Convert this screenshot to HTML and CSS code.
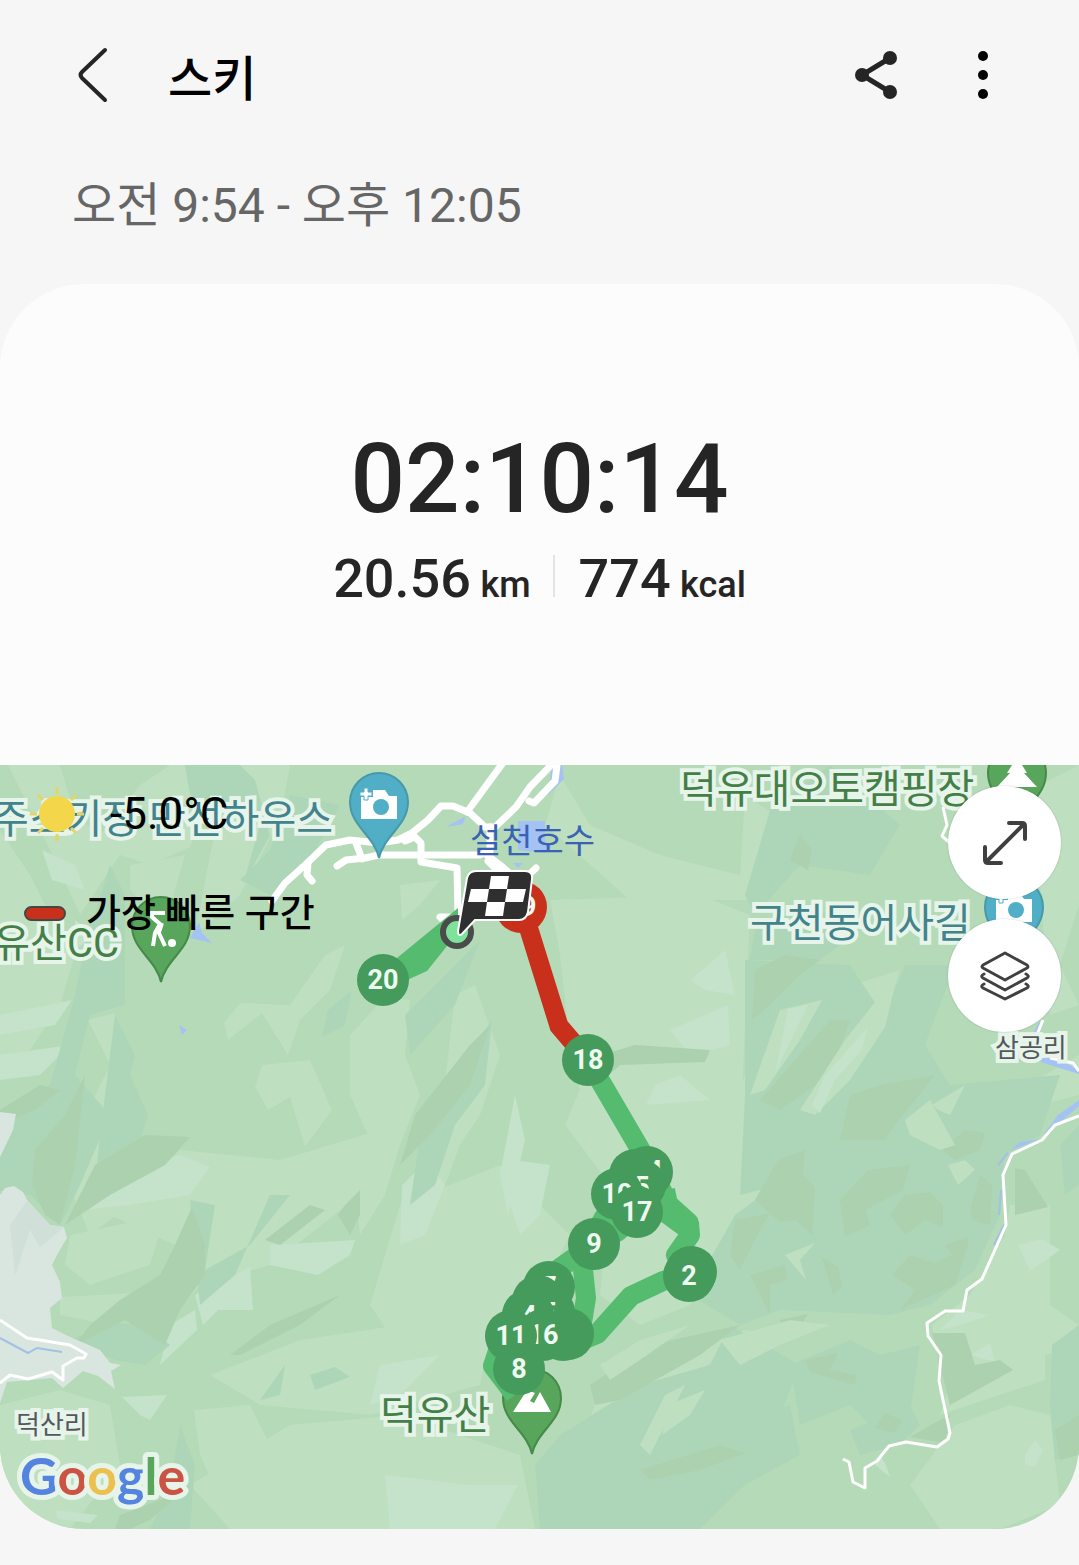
FILE: index.html
```html
<!DOCTYPE html>
<html lang="ko">

<head>
    <meta charset="UTF-8">
    <meta name="viewport" content="width=device-width, initial-scale=1.0">
    <title>스키</title>
    <link rel="stylesheet" href="styles.css">
</head>

<body>
    <header class="topbar">
        <button class="icon-btn back" aria-label="뒤로">
            <svg width="32" height="58" viewBox="0 0 32 58"><path d="M29 4 L6 26 Q3 29 6 32 L29 54" /></svg>
        </button>
        <h1>스키</h1>
        <button class="icon-btn share" aria-label="공유">
            <svg width="46" height="50" viewBox="0 0 46 50">
                <path d="M37 8 L9 25 L37 42" />
                <circle cx="37" cy="8" r="7" />
                <circle cx="9" cy="25" r="7" />
                <circle cx="37" cy="42" r="7" />
            </svg>
        </button>
        <button class="icon-btn more" aria-label="더보기">
            <svg width="12" height="50" viewBox="0 0 12 50">
                <circle cx="6" cy="6" r="5" />
                <circle cx="6" cy="25" r="5" />
                <circle cx="6" cy="44" r="5" />
            </svg>
        </button>
    </header>

    <p class="period">오전 9:54 - 오후 12:05</p>

    <main class="card">
        <section class="summary">
            <div class="duration">02:10:14</div>
            <div class="stats">
                <div class="stat">20.56 <span>km</span></div>
                <div class="stat">774 <span>kcal</span></div>
            </div>
        </section>

        <section class="map">
            <svg class="map-canvas" viewBox="0 0 1079 764">
                <defs>
                    <path id="pin" d="M0 56 C-5 33 -29 24 -29 0 A29 29 0 0 1 29 0 C29 24 5 33 0 56 Z" />
                    <g id="camera">
                        <path d="M-18 15 V-7 H-6 V-14 H6 L10 -8 H18 V15 Z" />
                        <path d="M-19 -8 V-12 H-15 V-16 H-11 V-12 H-7 V-8 H-11 V-4 H-15 V-8 Z" stroke="#51aec7" stroke-width="1" />
                        <circle cx="2" cy="3" r="8" fill="#51aec7" />
                    </g>
                </defs>

                <!-- terrain -->
                <rect width="1079" height="764" fill="#b5dab8" />
                <g class="light">
                    <path d="M8 0 L38 60 L55 95 L80 150 L120 90 L150 100 L190 82 L225 0 H170 L140 20 L100 70 L75 50 L60 0 Z" />
                    <path d="M0 65 L30 110 L50 150 L75 190 L60 240 L20 300 L0 310 Z" />
                    <path d="M130 100 L185 90 L165 160 L130 125 Z" />
                    <path d="M230 0 H290 L280 55 L240 130 L195 170 L210 90 Z" />
                    <path d="M88 255 L115 248 L125 320 L100 380 L130 440 L90 470 L60 400 L110 300 Z" />
                    <path d="M224 258 L240 238 L290 240 L325 190 L345 180 L330 225 L300 255 L288 290 L262 248 L228 275 Z" />
                    <path d="M262 300 L310 295 L332 345 L305 382 L290 332 L268 345 L255 322 Z" />
                    <path d="M350 270 L385 232 L410 235 L405 290 L420 330 L400 380 L385 430 L360 470 L355 420 L368 370 L350 330 Z" />
                    <path d="M400 120 L440 115 L420 140 L402 155 Z" />
                    <path d="M455 230 L475 220 L500 290 L480 350 L460 380 L430 460 L400 500 L415 430 L440 360 Z" />
                    <path d="M560 10 L590 60 L660 90 L740 110 L745 30 L790 60 L750 135 L630 135 L545 60 Z" />
                    <path d="M550 135 L700 130 L750 150 L742 330 L700 320 L590 370 L570 280 L560 190 Z" />
                    <path d="M590 300 L740 290 L745 400 L660 430 L610 420 L565 360 Z" />
                    <path d="M820 230 L900 205 L870 300 L820 360 L770 385 L790 320 Z" />
                    <path d="M110 450 L180 385 L280 395 L380 365 L360 430 L270 500 L200 520 L150 580 L175 480 Z" />
                    <path d="M70 470 L165 450 L150 500 L90 520 L65 500 Z" />
                    <path d="M60 532 L135 528 L110 560 L60 550 Z" />
                    <path d="M210 610 L300 575 L400 560 L490 570 L480 620 L370 650 L260 640 Z" />
                    <path d="M290 660 L400 650 L520 690 L535 764 H230 L190 720 Z" />
                    <path d="M194 645 L250 640 L280 700 L300 764 H235 L200 690 Z" />
                    <path d="M400 440 L500 400 L570 470 L540 530 L480 580 L410 600 L370 540 Z" />
                    <path d="M610 430 L760 390 L745 430 L790 400 L720 480 L690 540 L640 560 L600 530 Z" />
                    <path d="M745 310 L800 300 L760 400 L720 470 L720 370 Z" />
                    <path d="M600 620 L700 570 L750 565 L660 640 L580 690 Z" />
                    <path d="M1010 440 L1050 440 L1050 540 L1079 560 V580 L1045 590 V615 L940 650 L950 620 L935 585 L932 560 L970 530 L1005 470 Z" />
                    <path d="M955 660 L1010 640 L1050 650 L1060 740 L1000 764 H940 L910 720 Z" />
                    <path d="M720 340 L780 370 L740 420 L720 430 Z" />
                    <path d="M1010 330 L1079 290 V330 L1040 340 Z" />
                    <path d="M1020 30 L1079 0 V140 L1060 200 L1079 240 L1050 250 L1040 120 Z" />
                    <path d="M0 640 L60 625 L110 640 L120 700 L70 764 H30 L0 700 Z" />
                </g>
                <g class="bright">
                    <path d="M42 85 L75 100 L85 125 L52 115 Z" />
                    <path d="M0 250 L72 235 L55 260 L0 270 Z" />
                    <path d="M0 290 L70 280 L40 310 L0 315 Z" />
                    <path d="M83 445 L120 410 L180 390 L210 402 L190 430 L130 440 Z" />
                    <path d="M195 530 L250 502 L253 545 L218 545 L203 560 Z" />
                    <path d="M170 560 L195 545 L197 565 L160 600 Z" />
                    <path d="M270 480 L355 475 L350 490 L318 510 L270 500 Z" />
                    <path d="M402 420 L428 395 L445 420 L425 470 L400 480 Z" />
                    <path d="M515 330 L525 375 L508 450 L500 410 Z" />
                    <path d="M512 395 L550 400 L540 450 L520 470 L510 440 Z" />
                    <path d="M655 320 L680 310 L710 335 L646 340 Z" />
                    <path d="M690 215 L725 185 L735 230 L705 225 Z" />
                    <path d="M670 265 L728 240 L730 280 L690 290 Z" />
                    <path d="M385 710 L470 720 L518 720 L495 764 H390 Z" />
                    <path d="M380 600 L440 590 L400 630 L370 640 Z" />
                    <path d="M1018 480 L1042 474 L1060 485 L1030 506 Z" />
                    <path d="M940 565 L960 545 L990 550 L960 560 Z" />
                    <path d="M970 590 L990 578 L995 597 Z" />
                    <path d="M1025 690 L1035 675 L1043 685 L1035 702 L1025 700 Z" />
                    <path d="M880 690 L886 700 L890 712 L875 700 Z" />
                    <path d="M122 632 L167 630 L150 655 L140 650 Z" />
                    <path d="M55 745 L98 750 L90 758 L58 754 Z" />
                    <path d="M75 155 L95 170 L75 185 Z" />
                </g>
                <g class="teal">
                    <path d="M185 0 H240 L255 15 L270 70 L243 120 L260 60 L225 50 L190 30 Z" />
                    <path d="M290 30 L340 40 L310 95 L270 130 L240 115 L270 85 Z" />
                    <path d="M110 100 L125 130 L125 240 L90 250 L75 310 L110 350 L80 420 L60 460 L30 430 L0 425 V360 L50 320 L75 230 L85 180 Z" />
                    <path d="M115 250 L135 290 L130 310 L148 350 L130 410 L95 420 L100 370 Z" />
                    <path d="M328 245 L352 225 L345 260 L322 272 Z" />
                    <path d="M405 250 L480 175 L455 240 L410 290 Z" />
                    <path d="M445 345 L460 300 L492 255 L485 320 L455 360 L435 420 L410 440 L420 370 Z" />
                    <path d="M190 435 L215 440 L205 505 L250 480 L290 430 L270 430 L235 510 L200 540 Z" />
                    <path d="M70 575 L110 558 L145 560 L170 580 L145 600 L115 595 Z" />
                    <path d="M770 45 L830 0 L900 60 L870 110 L800 100 L755 150 L745 130 Z" />
                    <path d="M755 165 L800 135 L860 165 L820 195 L750 195 Z" />
                    <path d="M745 195 L850 200 L890 260 L860 360 L780 420 L740 430 L745 330 Z" />
                    <path d="M905 200 L955 200 L925 280 L950 320 L1060 310 L1040 370 L1005 390 L1000 450 L975 505 L930 540 L890 550 L780 545 L740 560 L690 530 L735 450 L830 380 Z" />
                    <path d="M560 670 L640 620 L710 600 L730 560 L800 600 L780 650 L740 680 L700 764 H540 L535 700 Z" />
                    <path d="M790 600 L850 575 L880 590 L920 580 L910 650 L880 670 L850 640 L800 660 Z" />
                    <path d="M700 670 L790 640 L800 690 L745 720 L700 764 H640 Z" />
                    <path d="M1052 580 L1079 560 V690 L1055 695 L1050 640 Z" />
                    <path d="M1060 380 L1079 360 V420 L1065 430 Z" />
                    <path d="M310 610 L335 602 L350 612 L315 625 Z" />
                    <path d="M260 635 L285 600 L280 630 Z" />
                    <path d="M180 660 L195 700 L190 764 H150 L170 720 Z" />
                    <path d="M850 665 L910 640 L920 660 L900 680 L860 690 Z" />
                </g>
                <g class="dark">
                    <path d="M35 385 L65 350 L85 310 L75 400 L60 460 L45 450 L32 420 Z" />
                    <path d="M95 400 L145 370 L190 372 L165 400 L110 430 L65 460 L85 420 Z" />
                    <path d="M192 442 L205 480 V510 L180 545 L165 580 L125 555 L75 580 L90 560 L120 535 L160 510 L175 480 Z" />
                    <path d="M415 350 L470 280 L490 260 L470 320 L430 370 L400 400 Z" />
                    <path d="M585 295 L635 280 L710 285 L705 297 L620 300 L600 318 Z" />
                    <path d="M755 205 L785 190 L820 195 L800 210 L770 240 L752 255 Z" />
                    <path d="M760 335 L830 255 L850 255 L830 310 L780 345 Z" />
                    <path d="M850 330 L880 320 L935 310 L895 360 L885 375 L840 375 Z" />
                    <path d="M800 70 L812 85 L808 105 L790 95 Z" />
                    <path d="M778 395 L805 385 L803 410 L815 422 L812 470 L795 455 L780 457 L755 435 Z" />
                    <path d="M735 455 L770 448 L760 465 L740 505 L730 490 Z" />
                    <path d="M840 435 L868 405 L910 400 L903 425 L865 445 L870 460 L845 472 Z" />
                    <path d="M890 450 L905 430 L930 427 L943 440 V462 L925 455 L905 470 Z" />
                    <path d="M942 385 L965 365 L985 368 L980 385 L955 395 Z" />
                    <path d="M970 445 L980 410 L992 420 L990 460 L972 455 Z" />
                    <path d="M892 510 L910 490 L935 498 L952 490 L945 480 L968 472 V480 L955 520 L900 545 L915 525 Z" />
                    <path d="M750 510 L785 500 L787 515 L770 520 V550 Z" />
                    <path d="M822 492 L838 502 L842 522 L833 530 Z" />
                    <path d="M780 555 L808 549 L800 562 L785 565 Z" />
                    <path d="M805 595 L838 588 L830 605 L857 610 L855 620 L810 607 Z" />
                    <path d="M590 620 L650 580 L740 560 L700 590 L620 635 L595 640 Z" />
                    <path d="M640 705 L720 680 L745 688 L700 705 L650 715 Z" />
                    <path d="M875 663 L885 648 L902 655 L895 668 Z" />
                    <path d="M910 672 L940 655 L950 650 L945 678 Z" />
                    <path d="M1015 403 L1025 405 L1048 442 L1015 450 Z" />
                    <path d="M932 568 L965 568 L975 600 L1000 595 L1013 605 L950 640 Z" />
                    <path d="M1055 665 L1079 650 V690 L1060 695 Z" />
                    <path d="M120 750 L160 735 L190 720 L150 755 L130 764 H115 Z" />
                    <path d="M230 590 L270 560 L340 530 L300 560 L240 590 Z" />
                    <path d="M265 475 L310 440 L325 445 L280 480 Z" />
                    <path d="M345 440 L360 425 V450 L350 470 L338 450 Z" />
                    <path d="M0 345 L40 320 L60 325 L35 345 L0 360 Z" />
                </g>
                <!-- ridges catching the light -->
                <g class="light">
                    <path d="M780 245 L822 235 L800 275 L765 325 L750 330 Z" />
                    <path d="M898 208 L885 262 L850 315 L815 350 L800 345 L845 275 Z" />
                    <path d="M932 340 L965 320 L950 350 L938 345 Z" />
                    <path d="M905 355 L930 335 L955 380 L940 385 L910 370 Z" />
                    <path d="M785 490 L815 478 L800 495 L806 515 Z" />
                    <path d="M948 400 L965 395 L975 405 L958 420 Z" />
                    <path d="M600 600 L640 575 L690 560 L640 595 L610 615 Z" />
                    <path d="M640 680 L665 630 L685 620 L650 690 Z" />
                    <path d="M668 640 L705 625 L690 650 L662 670 Z" />
                    <path d="M720 575 L790 555 L830 560 L780 580 L740 600 Z" />
                </g>
                <g class="bright">
                    <path d="M788 244 L808 240 L775 308 Z" />
                    <path d="M868 262 L862 285 L835 315 L820 348 L812 340 L825 310 Z" />
                </g>
                <g class="bare">
                    <path d="M0 347 L16 349 L13 365 L0 392 Z" />
                    <path d="M0 430 L5 423 L14 421 L23 427 L27 435 L50 460 L64 462 L67 473 L58 488 L52 500 L60 517 L62 533 L50 543 L52 563 L68 571 L100 585 L110 598 L121 600 L111 606 L115 624 L98 611 L83 606 L63 623 L52 613 L7 617 L0 638 Z" />
                </g>
                <path d="M27 436 L50 460 L64 462 L40 482 L30 465 L15 511 L10 460 Z" fill="#d0e0d8" />

                <!-- water -->
                <g class="water">
                    <path d="M446 62 L466 51 L463 59 Z" />
                    <path d="M518 56 H545 V76 L552 82 L545 88 L518 85 Z" />
                    <path d="M513 98 L523 98 L518 103 Z" />
                    <path d="M552 0 H562 L564 14 L548 30 Z" />
                    <path d="M190 173 L199 157 L202 168 L212 178 Z" />
                    <path d="M179 260 L187 265 L182 270 Z" />
                    <path d="M1079 335 L1058 350 L1044 369 L1048 368 L1079 341 Z" />
                    <path d="M1040 374 L1020 377 L1010 386 Z" />
                    <path d="M1030 275 L1040 255 V270 L1034 285 L1060 295 L1079 305 V309 L1050 300 L1028 292 Z" />
                </g>
                <path d="M0 573 L28 588 L37 583 L62 587 M1001 425 L999 450 M1004 460 L994 480 M1008 388 L998 400" fill="none" stroke="#a3c0e6" stroke-width="2" />

                <!-- roads -->
                <g class="roads">
                    <path d="M272 136 L285 118 L305 100 L326 80 L350 75 L379 78 L398 75 L412 68 L428 55 L441 41 L453 41 L470 48 L485 62 L495 62 L516 42 L530 22 L557 -6" />
                    <path d="M467 47 L505 -5" />
                    <path d="M529 36 L534 38 L555 16 L557 0" />
                    <path d="M337 101 L346 95 L365 93 L379 90 H480" />
                    <path d="M356 78 L362 94 M308 98 L307 110 L312 116 M405 76 L415 72 L421 78 V97 L457 103 L458 150" />
                    <path d="M484 88 L500 100 L540 135 M490 62 V95 M492 95 L520 118 L536 103 M488 96 L512 120" />
                    <path d="M440 152 H458 L450 162 Z" />
                </g>
                <g class="trails">
                    <path d="M1079 351 L1055 360 L1042 375 L1012 389 L1003 410 L1006 460 L982 514 L967 525 L963 546 H945 L927 558 L928 571 L941 590 L939 616 L950 668 L948 674 L937 682 L906 677 L889 681 L877 696 L865 703 V723 L853 717 L849 697 L843 694" />
                    <path d="M0 555 L27 573 L70 580 L86 589 L84 593 L77 593 L63 601 V615 L52 607 L28 614 L10 610 L0 618" />
                    <path d="M943 42 L947 60 L942 71 L950 78 M1043 255 L1036 272 M1050 293 L1073 298 L1079 306" />
                </g>

                <!-- places -->
                <g class="pin green">
                    <use href="#pin" x="161" y="161" />
                    <use href="#pin" x="1017" y="8" />
                    <use href="#pin" x="532" y="633" />
                </g>
                <g class="pin blue">
                    <use href="#pin" x="379" y="37" />
                    <use href="#pin" x="1014" y="142" />
                </g>
                <g fill="#fff">
                    <use href="#camera" x="379" y="39" />
                    <use href="#camera" x="1014" y="142" />
                    <circle cx="172" cy="178" r="4" />
                    <path d="M1017 -8 L1027 8 H1024 L1037 22 H997 L1010 8 H1007 Z" />
                    <path d="M513 647 L527 625 L535 628 L530 636 L534 638 L540 627 L551 647 Z" />
                </g>
                <path d="M165 148 H152 V152 L160 159 L155 168 L153 181 M158 166 L165 181 M162 158 L159 167" fill="none" stroke="#fff" stroke-width="4" />
                <g class="places">
                    <text class="teal-label" x="333" y="68" text-anchor="end">무주스키장 만선하우스</text>
                    <text class="green-label" x="119" y="192" text-anchor="end">덕유산CC</text>
                    <text class="green-label" x="680" y="38">덕유대오토캠핑장</text>
                    <text class="teal-label" x="750" y="172">구천동어사길</text>
                    <text class="green-label" x="380" y="664">덕유산</text>
                    <text class="town" x="995" y="292">삼공리</text>
                    <text class="town" x="16" y="669">덕산리</text>
                </g>
                <text class="lake" x="470" y="88">설천호수</text>
                <text class="google" x="20" y="730"><tspan class="g-blue">G</tspan><tspan class="g-red">o</tspan><tspan class="g-yellow">o</tspan><tspan class="g-blue">g</tspan><tspan class="g-green">l</tspan><tspan class="g-red">e</tspan></text>

                <!-- route -->
                <path d="M397 193 L458 143 V167 L447 181 L427 206 L405 216 L385 214 Z" fill="#55bb6f" />
                <g class="route">
                    <path d="M588 295 L647 396 L669 440 L689 458 L690 470 L676 490 L690 508 L663 516 L631 531 L597 569 L570 580" />
                    <path d="M665 425 L668 440 M655 440 L685 462 M640 447 L617 467 L594 479 L560 503 L540 530 L500 580 L493 601 L515 630" />
                    <path d="M617 430 L594 470 L582 495 L586 533 L580 570" />
                </g>
                <path d="M522 142 L559 261 L588 295" fill="none" stroke="#c9301c" stroke-width="19" />
                <g class="marker">
                    <circle cx="383" cy="215" r="26" /><text x="383" y="224">20</text>
                    <circle cx="588" cy="295" r="26" /><text x="588" y="304">18</text>
                    <circle cx="635" cy="410" r="26" />
                    <circle cx="647" cy="407" r="26" /><text x="647" y="415">14</text>
                    <circle cx="640" cy="420" r="26" /><text x="642" y="431">5</text>
                    <circle cx="617" cy="429" r="26" /><text x="617" y="438">10</text>
                    <circle cx="637" cy="447" r="26" /><text x="637" y="456">17</text>
                    <circle cx="594" cy="479" r="26" /><text x="594" y="488">9</text>
                    <circle cx="691" cy="507" r="26" />
                    <circle cx="689" cy="511" r="26" /><text x="689" y="520">2</text>
                    <circle cx="549" cy="522" r="26" /><text x="549" y="531">7</text>
                    <circle cx="538" cy="536" r="26" /><text x="538" y="545">12</text>
                    <circle cx="549" cy="547" r="26" /><text x="549" y="557">5</text>
                    <circle cx="528" cy="550" r="26" /><text x="529" y="560">4</text>
                    <circle cx="568" cy="569" r="26" /><text x="568" y="578">13</text>
                    <circle cx="563" cy="570" r="26" />
                    <circle cx="543" cy="570" r="26" /><text x="543" y="579">16</text>
                    <circle cx="511" cy="571" r="26" /><text x="511" y="580">11</text>
                    <circle cx="519" cy="604" r="26" /><text x="519" y="613">8</text>
                    <circle cx="521" cy="142" r="26" fill="#c9301c" /><text x="521" y="151">19</text>
                </g>

                <!-- finish -->
                <circle cx="457" cy="167" r="14" fill="#7ee29a" stroke="#4b4b4b" stroke-width="6" />
                <path d="M476 106 H525 Q533 106 532 114 L528 147 Q526 155 519 155 H475 L462 169 Q458 172 458 166 L467 113 Q469 106 476 106 Z" fill="#2f2f2f" stroke="#fff" stroke-width="2" />
                <path d="M491 111 H509 L507 124 H526 L523 137 H505 L503 151 H485 L487 137 H468 L471 124 H489 Z M489 124 L487 137 H505 L507 124 Z" fill="#fff" fill-rule="evenodd" />
            </svg>

            <div class="legend">
                <div class="legend-row weather">
                    <svg width="58" height="58" viewBox="0 0 58 58">
                        <path d="M29 2 V9 M29 49 V56 M2 29 H9 M49 29 H56 M10 10 L15 15 M43 43 L48 48 M48 10 L43 15 M15 43 L10 48" stroke="#e3d567" stroke-width="3" />
                        <circle cx="29" cy="29" r="18" fill="#f4d64a" />
                    </svg>
                    <span>-5.0°C</span>
                </div>
                <div class="legend-row fastest">
                    <i class="swatch"></i>
                    <span>가장 빠른 구간</span>
                </div>
            </div>

            <div class="map-buttons">
                <button class="round-btn" aria-label="지도 확대">
                    <svg width="46" height="46" viewBox="0 0 46 46"><path d="M5 41 L41 5 M27 3 H40 Q43 3 43 6 V19 M3 27 V40 Q3 43 6 43 H19" /></svg>
                </button>
                <button class="round-btn" aria-label="지도 유형">
                    <svg width="50" height="50" viewBox="0 0 50 50" class="layers">
                        <path d="M25 2 L47 14 Q49 16 47 17 L25 29 L3 17 Q1 16 3 14 Z" />
                        <path d="M4 23 Q0 25 3 27 L25 39 L47 27 Q50 25 46 23" />
                        <path d="M4 33 Q0 35 3 37 L25 48 L47 37 Q50 35 46 33" />
                    </svg>
                </button>
            </div>
        </section>
    </main>
</body>

</html>
```

FILE: styles.css
```css
* {
    box-sizing: border-box;
}

body {
    margin: 0;
    background-color: #f6f6f6;
    color: #252525;
    font-family: Roboto, "Noto Sans CJK KR", sans-serif;
}

button {
    border: none;
    padding: 0;
    cursor: pointer;
}

.topbar {
    display: flex;
    align-items: center;
    height: 150px;
    padding: 0 90px 0 76px;
}

.topbar h1 {
    flex: 1;
    margin: 0 0 0 60px;
    color: #000;
    font-size: 48px;
    font-weight: 500;
}

.icon-btn {
    display: flex;
    background: none;
}

.back path {
    fill: none;
    stroke: #252525;
    stroke-width: 4;
    stroke-linecap: round;
}

.share {
    margin-right: 78px;
}

.share path {
    fill: none;
    stroke: #252525;
    stroke-width: 5;
}

.share circle {
    fill: #252525;
}

.period {
    margin: 24px 72px 46px;
    color: #666;
    font-size: 48px;
    line-height: 64px;
}

.card {
    margin-bottom: 36px;
    border-radius: 84px;
    background-color: #fcfcfc;
    overflow: hidden;
}

.summary {
    padding: 139px 0 148px;
    font-weight: 500;
    text-align: center;
}

.duration {
    font-size: 96px;
    line-height: 112px;
}

.stats {
    display: flex;
    justify-content: center;
    padding-top: 12px;
}

.stat {
    font-size: 54px;
    line-height: 64px;
}

.stat span {
    margin-left: -4px;
    font-size: 36px;
}

.stat + .stat {
    position: relative;
    margin-left: 24px;
    padding-left: 24px;
}

.stat + .stat::before {
    content: "";
    position: absolute;
    left: -2px;
    top: 8px;
    width: 2px;
    height: 42px;
    background-color: #e4e4e4;
}

.map {
    position: relative;
}

.map-canvas {
    display: block;
    width: 100%;
    height: auto;
}

.light {
    fill: #bedfc0;
}

.bright {
    fill: #c4e3ca;
}

.teal {
    fill: #add6b9;
}

.dark {
    fill: #abd1ae;
}

.bare {
    fill: #d8e6df;
}

.water {
    fill: #a4c2f4;
}

.roads path {
    fill: none;
    stroke: #fff;
    stroke-width: 7;
    stroke-linecap: round;
    stroke-linejoin: round;
}

.trails path {
    fill: none;
    stroke: #fff;
    stroke-width: 3;
    stroke-linejoin: round;
}

.pin {
    stroke-width: 2;
}

.pin.green {
    fill: #58a55c;
    stroke: #468a49;
}

.pin.blue {
    fill: #51aec7;
    stroke: #4799a9;
}

.places text {
    font-size: 40px;
    stroke: #e6f4ea;
    stroke-width: 8px;
    paint-order: stroke;
}

.places .teal-label {
    fill: #43838b;
}

.places .green-label {
    fill: #437f47;
}

.places .town {
    fill: #54585c;
    font-size: 26px;
}

.lake {
    fill: #3a62b4;
    font-size: 34px;
}

.google {
    font-family: Lato, sans-serif;
    font-size: 52px;
    font-weight: 700;
    stroke: #e6f4ea;
    stroke-width: 10px;
    stroke-linejoin: round;
    paint-order: stroke;
}

.g-blue {
    fill: #5584e0;
}

.g-red {
    fill: #cb5343;
}

.g-yellow {
    fill: #ecc04f;
}

.g-green {
    fill: #58a55c;
}

.route path {
    fill: none;
    stroke: #55bb6f;
    stroke-width: 20;
    stroke-linejoin: round;
}

.marker {
    fill: #459b5c;
}

.marker text {
    fill: #eefaf0;
    font-size: 27px;
    font-weight: 700;
    text-anchor: middle;
}

.legend {
    position: absolute;
    top: 20px;
    left: 24px;
    color: #000;
}

.legend-row {
    display: flex;
    align-items: center;
}

.weather {
    gap: 24px;
    padding-left: 4px;
    font-size: 44px;
    line-height: 58px;
}

.fastest {
    gap: 20px;
    margin-top: 41px;
    font-size: 38px;
    font-weight: 500;
    line-height: 58px;
}

.swatch {
    width: 42px;
    height: 15px;
    border: 2px solid #464646;
    border-radius: 8px;
    background-color: #c9301c;
}

.map-buttons {
    position: absolute;
    top: 21px;
    right: 18px;
    display: flex;
    flex-direction: column;
    gap: 20px;
}

.round-btn {
    display: flex;
    align-items: center;
    justify-content: center;
    width: 113px;
    height: 113px;
    border-radius: 50%;
    background-color: #fff;
    box-shadow: 0 0 2px rgba(0, 0, 0, 0.2);
}

.round-btn path {
    fill: none;
    stroke: #404040;
    stroke-width: 4;
    stroke-linecap: round;
}

.round-btn .layers path {
    stroke-width: 3;
    stroke-linejoin: round;
}
```
